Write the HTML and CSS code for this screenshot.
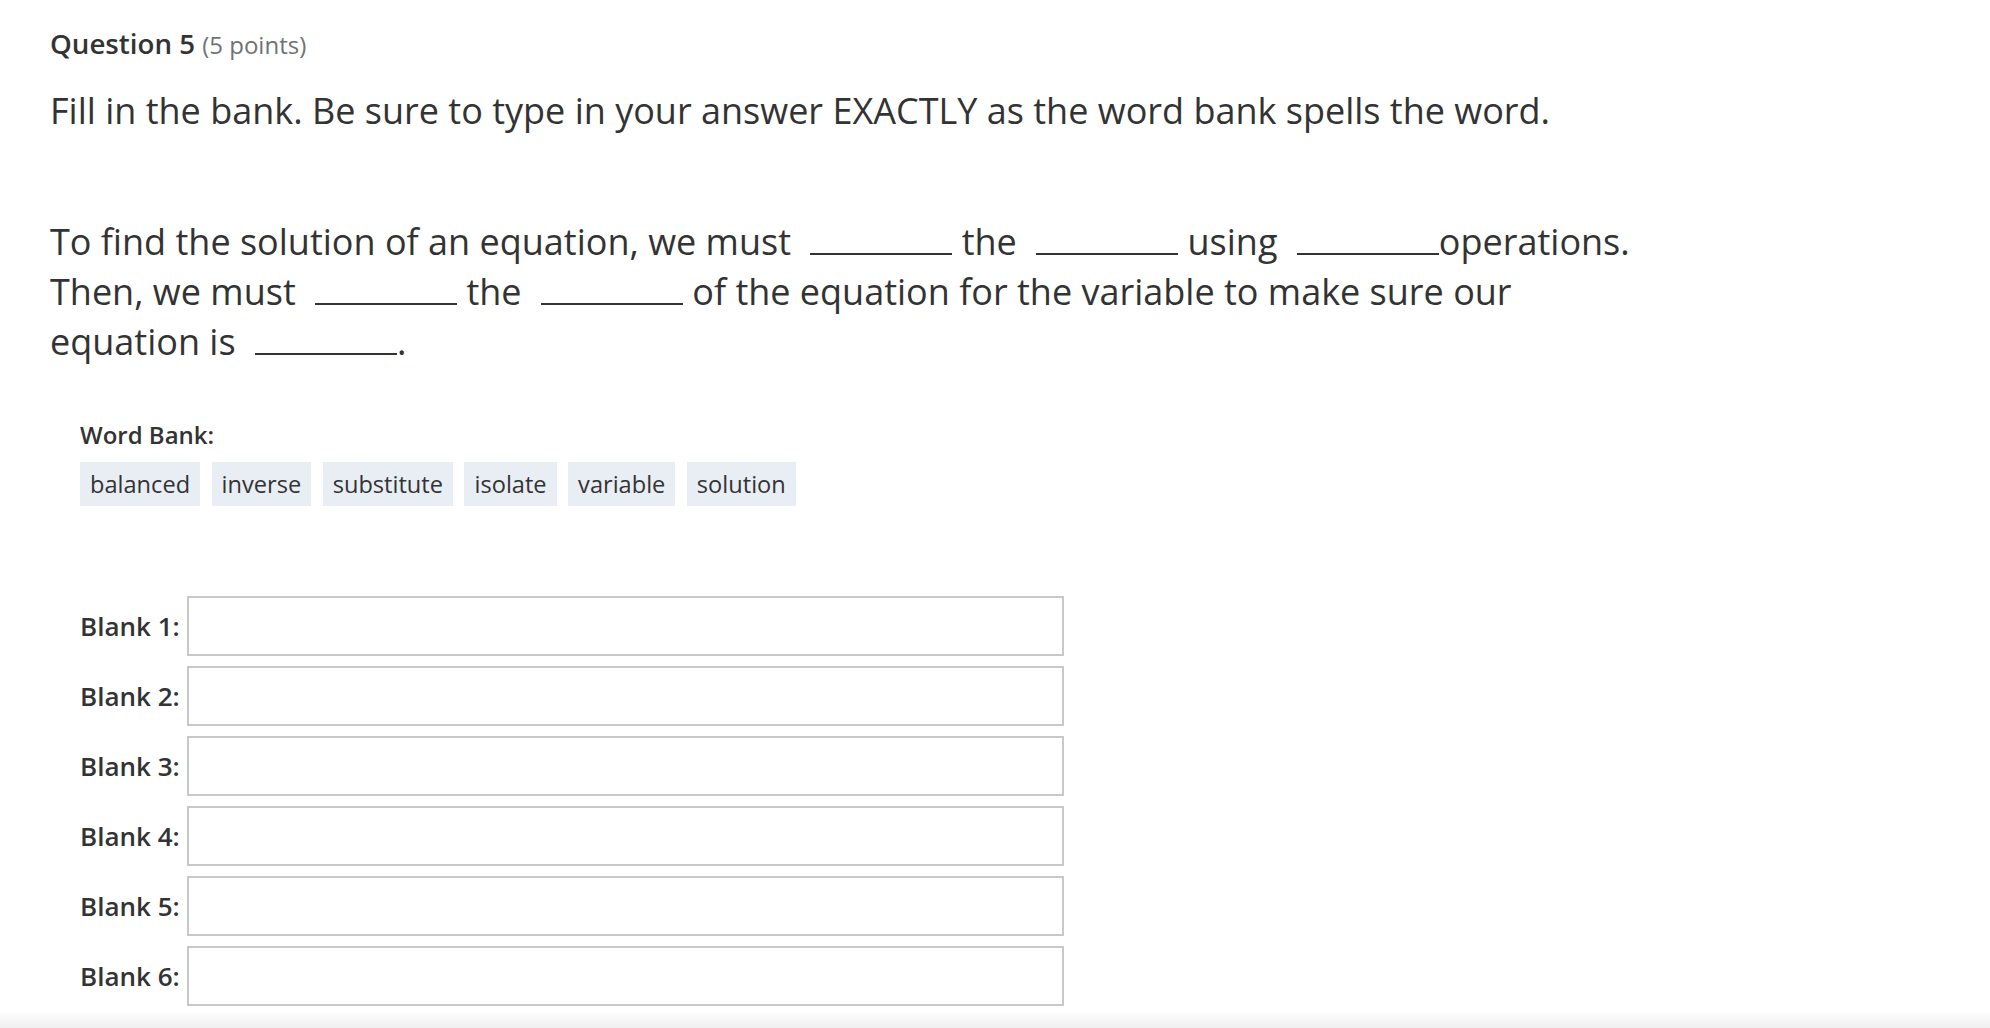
FILE: index.html
```html
<!DOCTYPE html>
<html lang="en">
<head>
<meta charset="utf-8">
<title>Question 5</title>
<link rel="stylesheet" href="styles.css">
</head>
<body>
<main class="question">
  <h2 class="q-title"><span class="q-num">Question 5</span> <span class="q-points">(5 points)</span></h2>
  <p class="q-instructions">Fill in the bank. Be sure to type in your answer EXACTLY as the word bank spells the word.</p>
  <p class="q-text">To find the solution of an equation, we must <span class="blank"></span> the <span class="blank"></span> using <span class="blank"></span>operations. Then, we must <span class="blank"></span> the <span class="blank"></span> of the equation for the variable to make sure our equation is <span class="blank"></span>.</p>

  <section class="word-bank">
    <div class="wb-label">Word Bank:</div>
    <ul class="wb-list">
      <li class="chip">balanced</li>
      <li class="chip">inverse</li>
      <li class="chip">substitute</li>
      <li class="chip">isolate</li>
      <li class="chip">variable</li>
      <li class="chip">solution</li>
    </ul>
  </section>

  <form class="answers">
    <label class="ans-label" for="b1">Blank 1:</label><input class="ans-input" id="b1" type="text">
    <label class="ans-label" for="b2">Blank 2:</label><input class="ans-input" id="b2" type="text">
    <label class="ans-label" for="b3">Blank 3:</label><input class="ans-input" id="b3" type="text">
    <label class="ans-label" for="b4">Blank 4:</label><input class="ans-input" id="b4" type="text">
    <label class="ans-label" for="b5">Blank 5:</label><input class="ans-input" id="b5" type="text">
    <label class="ans-label" for="b6">Blank 6:</label><input class="ans-input" id="b6" type="text">
  </form>
</main>
<div class="bottom-fade"></div>
</body>
</html>
```
FILE: styles.css
```css
html, body {
  margin: 0;
  padding: 0;
  background: #ffffff;
}
body {
  font-family: "Open Sans", "Noto Sans", sans-serif;
  color: #333333;
  overflow: hidden;
}
.question {
  padding: 27.5px 0 0 50px;
  width: 1600px;
}
.q-title {
  margin: 0;
  font-size: 27.7px;
  line-height: 31px;
  font-weight: 600;
}
.q-num {
  color: #333333;
}
.q-points {
  font-size: 24px;
  font-weight: 400;
  color: #6e7376;
}
.q-instructions {
  margin: 26px 0 0 0;
  font-size: 36px;
  line-height: 50px;
}
.q-text {
  margin: 81px 0 0 0;
  font-size: 36px;
  line-height: 50px;
}
.blank {
  display: inline-block;
  width: 142px;
  height: 10px;
  margin-left: 10px;
  border-bottom: 2px solid #333333;
  vertical-align: baseline;
}
.word-bank {
  margin: 52px 0 0 30px;
}
.wb-label {
  font-size: 24px;
  line-height: 32px;
  font-weight: 600;
}
.wb-list {
  list-style: none;
  margin: 11px 0 0 0;
  padding: 0;
  display: flex;
  gap: 11.5px;
}
.chip {
  background: #e9eef5;
  font-size: 23.6px;
  line-height: 44px;
  padding: 0 10px;
}
.answers {
  margin: 90px 0 0 30px;
  display: grid;
  grid-template-columns: auto 877px;
  column-gap: 7px;
  row-gap: 10px;
  align-items: center;
  justify-content: start;
}
.ans-label {
  font-size: 26px;
  font-weight: 600;
  line-height: 32px;
}
.ans-input {
  box-sizing: border-box;
  height: 60px;
  width: 877px;
  margin: 0;
  border: 2px solid #c8c8c8;
  border-radius: 0;
  background: #ffffff;
  font: inherit;
}
.bottom-fade {
  position: fixed;
  left: 0;
  right: 0;
  bottom: 0;
  height: 18px;
  background: linear-gradient(to bottom, rgba(240,240,240,0), #efefef);
}
```
